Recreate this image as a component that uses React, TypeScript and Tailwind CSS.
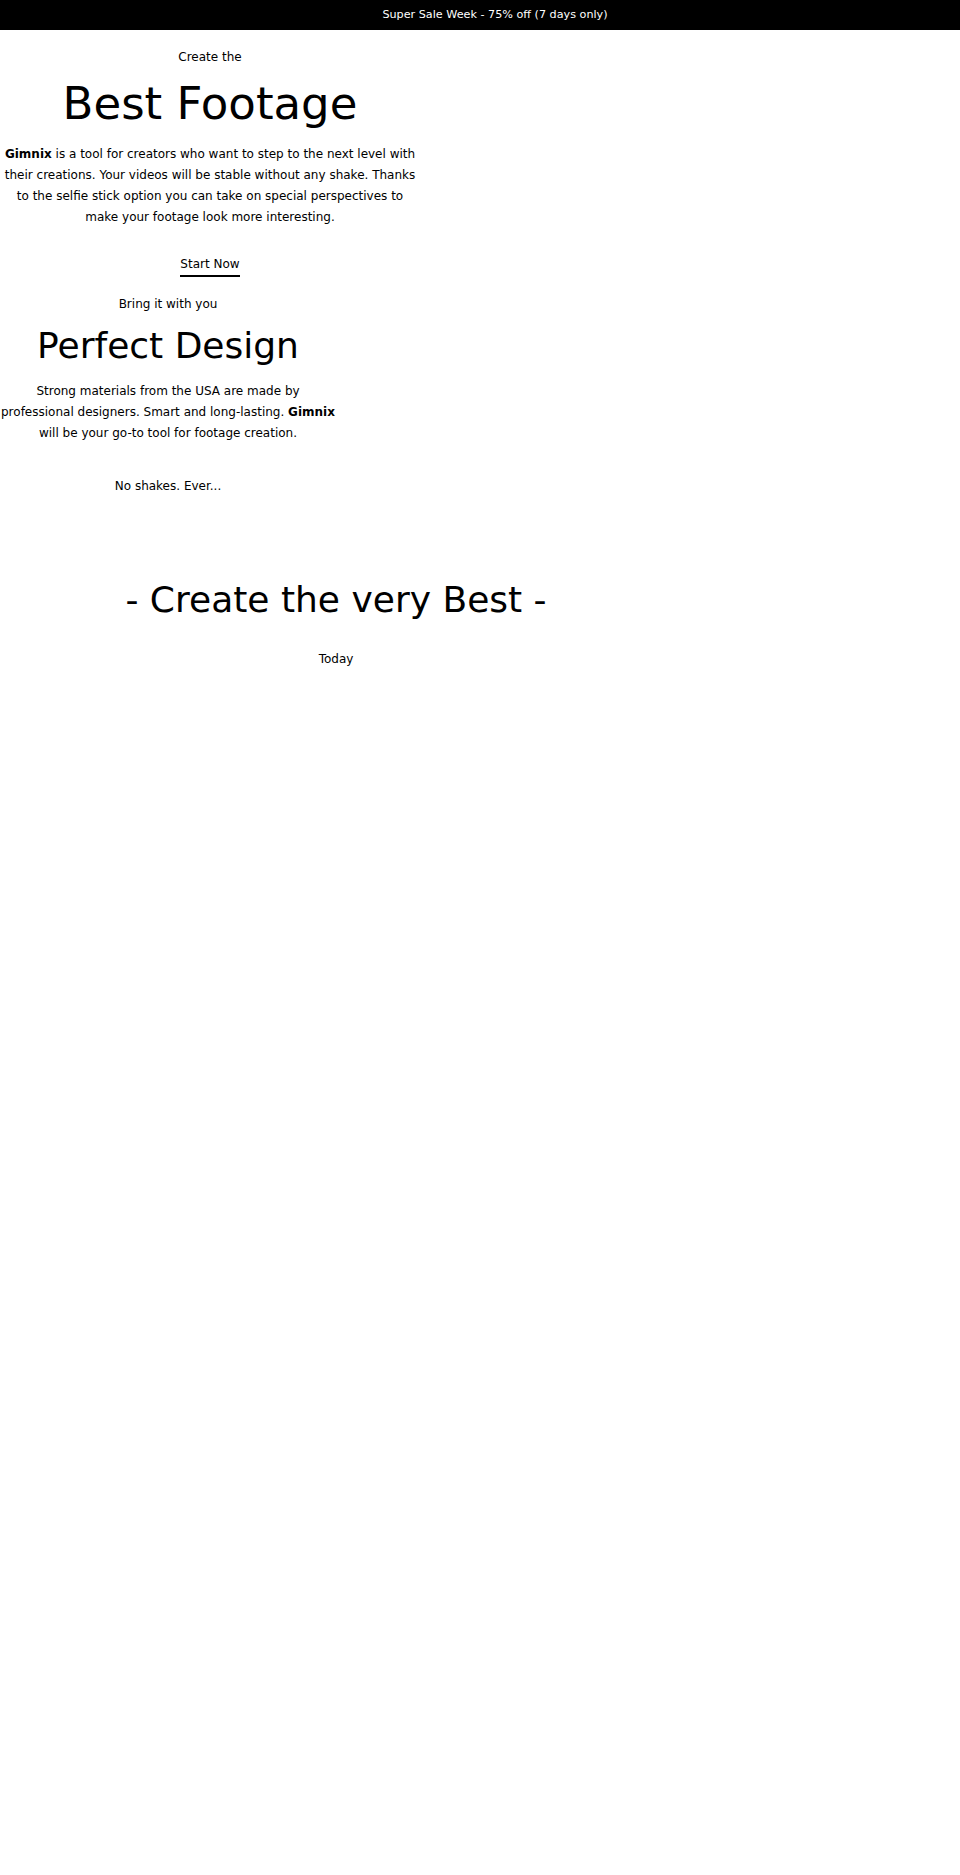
export default function App() {
  return (
    <div className="min-h-[1875px] bg-white text-black" style={{ fontFamily: '"DejaVu Sans", sans-serif' }}>
      {/* Announcement bar */}
      <div className="h-[30px] bg-black text-white flex items-center justify-center pl-[30px] text-[11.2px]">
        Super Sale Week - 75% off (7 days only)
      </div>

      {/* Hero */}
      <section className="w-[420px] text-center">
        <p className="mt-[17px] text-[12px] leading-[21px]">Create the</p>
        <h1 className="mt-[13px] text-[45px] leading-none">Best Footage</h1>
        <p className="mt-[18px] text-[12px] leading-[21px]">
          <strong>Gimnix</strong> is a tool for creators who want to step to the next level with their creations. Your
          videos will be stable without any shake. Thanks to the selfie stick option you can take on special
          perspectives to make your footage look more interesting.
        </p>
        <div className="mt-[23px]">
          <a href="#" className="inline-block text-[12px] leading-[21px] border-b-2 border-black">
            Start Now
          </a>
        </div>
      </section>

      {/* Design */}
      <section className="w-[336px] text-center">
        <p className="mt-[17px] text-[12px] leading-[21px]">Bring it with you</p>
        <h2 className="mt-[13px] text-[36px] leading-none">Perfect Design</h2>
        <p className="mt-[17px] text-[12px] leading-[21px]">
          Strong materials from the USA are made by professional designers. Smart and long-lasting.{' '}
          <strong>Gimnix</strong> will be your go-to tool for footage creation.
        </p>
        <p className="mt-[32px] text-[12px] leading-[21px]">No shakes. Ever...</p>
      </section>

      {/* Closing */}
      <section className="w-[672px] text-center">
        <h2 className="mt-[85px] text-[36px] leading-none">- Create the very Best -</h2>
        <p className="mt-[31px] text-[12px] leading-[21px]">Today</p>
      </section>
    </div>
  )
}
